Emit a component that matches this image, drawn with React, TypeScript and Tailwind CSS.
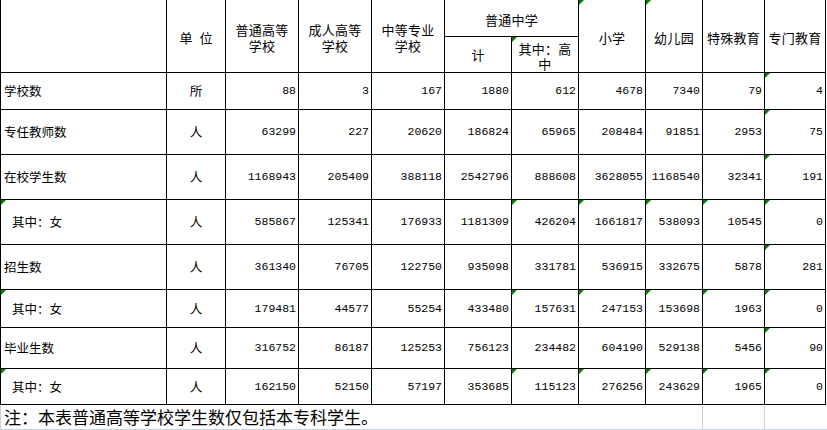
import React from "react";

const rows: { label: string; sub?: boolean; unit: string; vals: string[] }[] = [
  { label: "学校数", unit: "所", vals: ["88", "3", "167", "1880", "612", "4678", "7340", "79", "4"] },
  { label: "专任教师数", unit: "人", vals: ["63299", "227", "20620", "186824", "65965", "208484", "91851", "2953", "75"] },
  { label: "在校学生数", unit: "人", vals: ["1168943", "205409", "388118", "2542796", "888608", "3628055", "1168540", "32341", "191"] },
  { label: "其中：女", sub: true, unit: "人", vals: ["585867", "125341", "176933", "1181309", "426204", "1661817", "538093", "10545", "0"] },
  { label: "招生数", unit: "人", vals: ["361340", "76705", "122750", "935098", "331781", "536915", "332675", "5878", "281"] },
  { label: "其中：女", sub: true, unit: "人", vals: ["179481", "44577", "55254", "433480", "157631", "247153", "153698", "1963", "0"] },
  { label: "毕业生数", unit: "人", vals: ["316752", "86187", "125253", "756123", "234482", "604190", "529138", "5456", "90"] },
  { label: "其中：女", sub: true, unit: "人", vals: ["162150", "52150", "57197", "353685", "115123", "276256", "243629", "1965", "0"] },
];

const Tri = () => (
  <span className="absolute left-0 top-0 h-0 w-0 border-t-[5px] border-r-[5px] border-t-[#008000] border-r-transparent" />
);

const cjk = "font-['Noto_Sans_CJK_SC','Liberation_Sans',sans-serif]";
const mono = "font-['Liberation_Mono','DejaVu_Sans_Mono',monospace]";

export default function App() {
  return (
    <div className={`w-[827px] h-[430px] bg-white text-black ${cjk}`}>
      <div className="w-[826px] grid grid-cols-[165px_58px_72px_72px_72px_66px_66px_66px_56px_61px_60px] grid-rows-[36px_35px_36px_44px_44px_44px_44px_37px_40px_35px] gap-px bg-black px-px pb-px">
        {/* header */}
        <div className="bg-white row-span-2" />
        <div className="bg-white row-span-2 flex items-center justify-center gap-[7px] pt-[4px] text-[13px] leading-[16px]">
          <span>单</span>
          <span>位</span>
        </div>
        <div className="bg-white row-span-2 flex items-center justify-center pt-[4px] text-center text-[13px] leading-[16px] tracking-[0.3px]">普通高等<br />学校</div>
        <div className="bg-white row-span-2 flex items-center justify-center pt-[4px] text-center text-[13px] leading-[16px] tracking-[0.3px]">成人高等<br />学校</div>
        <div className="bg-white row-span-2 flex items-center justify-center pt-[4px] text-center text-[13px] leading-[16px] tracking-[0.3px]">中等专业<br />学校</div>
        <div className="bg-white col-span-2 flex items-center justify-center pt-[4px] text-[13px] leading-[16px] tracking-[0.3px]">普通中学</div>
        <div className="bg-white row-span-2 relative flex items-center justify-center pt-[4px] text-[13px] leading-[16px] tracking-[0.3px]"><Tri />小学</div>
        <div className="bg-white row-span-2 relative flex items-center justify-center pt-[4px] text-[13px] leading-[16px] tracking-[0.3px]"><Tri />幼儿园</div>
        <div className="bg-white row-span-2 flex items-center justify-center pt-[4px] text-[13px] leading-[16px] tracking-[0.3px] whitespace-nowrap">特殊教育</div>
        <div className="bg-white row-span-2 flex items-center justify-center pt-[4px] text-[13px] leading-[16px] tracking-[0.3px] whitespace-nowrap">专门教育</div>
        <div className="bg-white col-start-6 row-start-2 flex items-center justify-center text-[13px] leading-[16px]">计</div>
        <div className="bg-white col-start-7 row-start-2 relative flex items-center justify-center pt-[2px] text-center text-[13px] leading-[15px] tracking-[0.3px]"><Tri />其中：高<br />中</div>

        {rows.map((r, ri) => (
          <React.Fragment key={ri}>
            <div className={`bg-white relative flex items-center text-[12.5px] leading-[16px] ${r.sub ? "pl-[11px]" : "pl-[3px]"}`}>
              {r.sub && <Tri />}
              {r.label}
            </div>
            <div className="bg-white flex items-center justify-center text-[12.5px] leading-[16px]">{r.unit}</div>
            {r.vals.map((v, vi) => {
              const col = vi + 2;
              const tri = col === 10 || (r.sub && col >= 6);
              return (
                <div key={vi} className={`bg-white relative flex items-center justify-end pr-[2px] text-[11.5px] leading-[16px] ${mono}`}>
                  {tri && <Tri />}
                  {v}
                </div>
              );
            })}
          </React.Fragment>
        ))}
      </div>
      <div className="w-[827px] h-[25px] flex border-l border-b border-[#c8d0e0]">
        <div className="w-[701px] flex items-center pl-[3px] text-[17px] leading-[20px] whitespace-nowrap">注：本表普通高等学校学生数仅包括本专科学生。</div>
        <div className="w-[62px] border-l border-[#c8d0e0]" />
        <div className="w-[61px] border-l border-[#c8d0e0]" />
      </div>
    </div>
  );
}
